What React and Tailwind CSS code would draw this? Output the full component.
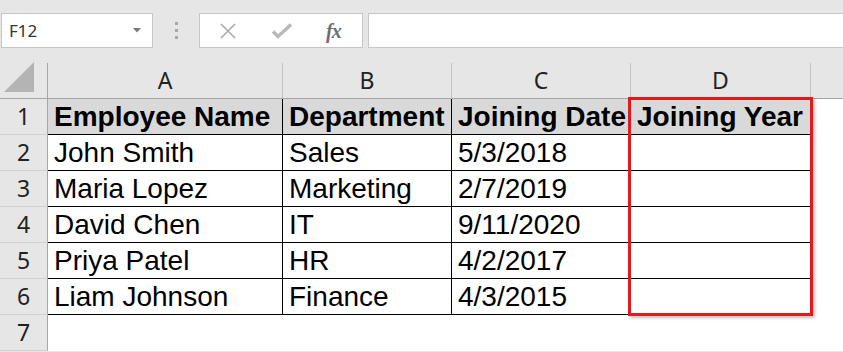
const rows = [
  ['John Smith', 'Sales', '5/3/2018'],
  ['Maria Lopez', 'Marketing', '2/7/2019'],
  ['David Chen', 'IT', '9/11/2020'],
  ['Priya Patel', 'HR', '4/2/2017'],
  ['Liam Johnson', 'Finance', '4/3/2015'],
];

const cols = ['A', 'B', 'C', 'D'];
const grid = 'grid grid-cols-[48px_235px_169px_179px_180px_1fr]';

function RowHead({ n }) {
  return (
    <div className="h-9 flex items-center justify-center bg-[#e6e6e6] border-r border-r-[#a6a6a6] border-b border-b-[#d0d0d0] text-[23px] text-[#222] font-['Noto_Sans',sans-serif]">
      {n}
    </div>
  );
}

function Cell({ children, head }) {
  return (
    <div
      className={`h-9 flex items-center pl-[6px] overflow-hidden whitespace-nowrap border-r border-b border-black text-[28px] leading-none text-black font-['Liberation_Sans',Arial,sans-serif] ${
        head ? 'bg-[#d9d9d9] font-bold' : 'bg-white'
      }`}
    >
      {children}
    </div>
  );
}

export default function App() {
  return (
    <div className="w-[843px] h-[352px] overflow-hidden bg-[#e6e6e6] select-none">
      {/* formula bar */}
      <div className="h-[63px] pt-[13px] flex items-start">
        <div className="ml-px w-[152px] h-[35px] bg-white border border-[#c6c6c6] flex items-center justify-between pl-[7px] pr-[11px]">
          <span className="text-[17px] text-[#333] font-['Noto_Sans',sans-serif]">F12</span>
          <svg width="8" height="5" viewBox="0 0 8 5">
            <path d="M0 0h8L4 4.5z" fill="#7a7a7a" />
          </svg>
        </div>
        <div className="w-[46px] h-[35px] flex flex-col items-center justify-center gap-[4px]">
          <span className="w-[3px] h-[3px] bg-[#a8a8a8]" />
          <span className="w-[3px] h-[3px] bg-[#a8a8a8]" />
          <span className="w-[3px] h-[3px] bg-[#a8a8a8]" />
        </div>
        <div className="w-[164px] h-[35px] bg-white border border-[#c6c6c6] flex items-center pl-[19px]">
          <svg width="18" height="18" viewBox="0 0 18 18">
            <path d="M2 2l14 14M16 2L2 16" stroke="#a9a9a9" strokeWidth="1.6" fill="none" />
          </svg>
          <svg className="ml-[35px]" width="20" height="16" viewBox="0 0 20 16">
            <path d="M1 8.5l5 5L19 1.5" stroke="#b9b9b9" strokeWidth="3.4" fill="none" />
          </svg>
          <span className="ml-[34px] text-[20px] italic font-semibold text-[#6e6e6e] font-['Liberation_Serif',serif] tracking-[-1px]">
            fx
          </span>
        </div>
        <div className="ml-[5px] flex-1 h-[35px] bg-white border border-r-0 border-[#c6c6c6]" />
      </div>

      {/* sheet */}
      <div className="relative">
        <div className={grid}>
          <div className="h-9 bg-[#e6e6e6] border-r border-r-[#a6a6a6] border-b border-b-[#a6a6a6] flex items-end justify-end pr-[13px] pb-[6px]">
            <svg width="30" height="30" viewBox="0 0 30 30">
              <path d="M30 0V30H0z" fill="#b4b4b4" />
            </svg>
          </div>
          {cols.map((c) => (
            <div
              key={c}
              className="h-9 flex items-center justify-center bg-[#e6e6e6] border-r border-r-[#c3c3c3] border-b border-b-[#a6a6a6] text-[23px] text-[#222] font-['Noto_Sans',sans-serif]"
            >
              {c}
            </div>
          ))}
          <div className="h-9 bg-[#e6e6e6] border-b border-b-[#a6a6a6]" />

          <RowHead n={1} />
          <Cell head>Employee Name</Cell>
          <Cell head>Department</Cell>
          <Cell head>Joining Date</Cell>
          <Cell head>Joining Year</Cell>
          <div className="h-9 bg-white" />

          {rows.map((r, i) => (
            <div key={i} className="contents">
              <RowHead n={i + 2} />
              <Cell>{r[0]}</Cell>
              <Cell>{r[1]}</Cell>
              <Cell>{r[2]}</Cell>
              <Cell />
              <div className="h-9 bg-white" />
            </div>
          ))}

          <RowHead n={7} />
          <div className="col-span-5 h-9 bg-white" />
        </div>

        <div className="absolute left-[628px] top-[34px] w-[185px] h-[219px] border-[3px] border-[#e11b1b] shadow-[2px_2px_3px_rgba(0,0,0,0.25)]" />
      </div>
    </div>
  );
}
